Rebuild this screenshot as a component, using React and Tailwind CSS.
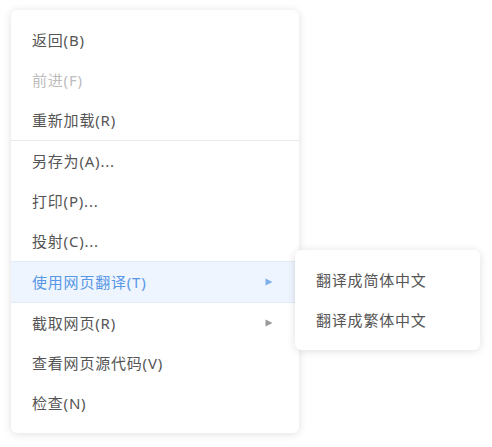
const items = [
  { label: '返回(B)' },
  { label: '前进(F)', disabled: true },
  { label: '重新加载(R)', divider: true },
  { label: '另存为(A)...' },
  { label: '打印(P)...' },
  { label: '投射(C)...' },
  { label: '使用网页翻译(T)', sub: true, active: true },
  { label: '截取网页(R)', sub: true },
  { label: '查看网页源代码(V)' },
  { label: '检查(N)' },
];

const subItems = ['翻译成简体中文', '翻译成繁体中文'];

const Arrow = ({ color }) => (
  <svg width="8" height="8" viewBox="0 0 8 8" className="mr-[26px]">
    <path d="M0.5 0.5 L7.5 4 L0.5 7.5 Z" fill={color} />
  </svg>
);

export default function App() {
  return (
    <div
      className="relative w-[492px] h-[447px] bg-white text-[15px] tracking-[0.8px] text-[#555]"
      style={{ fontFamily: '"Noto Sans", "Noto Sans CJK SC", sans-serif' }}
    >
      <div className="absolute left-[11px] top-[10px] w-[288px] py-[10px] bg-white rounded-[6px] shadow-[0_1px_8px_rgba(0,0,0,0.13)]">
        {items.map((it) => (
          <div key={it.label}>
            <div
              className={
                'flex items-center justify-between pl-[21px] ' +
                (it.active
                  ? 'h-[42px] bg-[#eef5fe] border-y border-[#e3ecf8] text-[#5897e6]'
                  : 'h-[40px]') +
                (it.disabled ? ' text-[#bdbdbd]' : '')
              }
            >
              <span>{it.label}</span>
              {it.sub && <Arrow color={it.active ? '#7db0ec' : '#9a9a9a'} />}
            </div>
            {it.divider && <div className="h-px bg-[#ebebeb]" />}
          </div>
        ))}
      </div>

      <div className="absolute left-[295px] top-[250px] w-[185px] py-[10px] bg-white rounded-[6px] shadow-[0_1px_8px_rgba(0,0,0,0.13)]">
        {subItems.map((s) => (
          <div key={s} className="h-[40px] flex items-center pl-[21px]">
            {s}
          </div>
        ))}
      </div>
    </div>
  );
}
